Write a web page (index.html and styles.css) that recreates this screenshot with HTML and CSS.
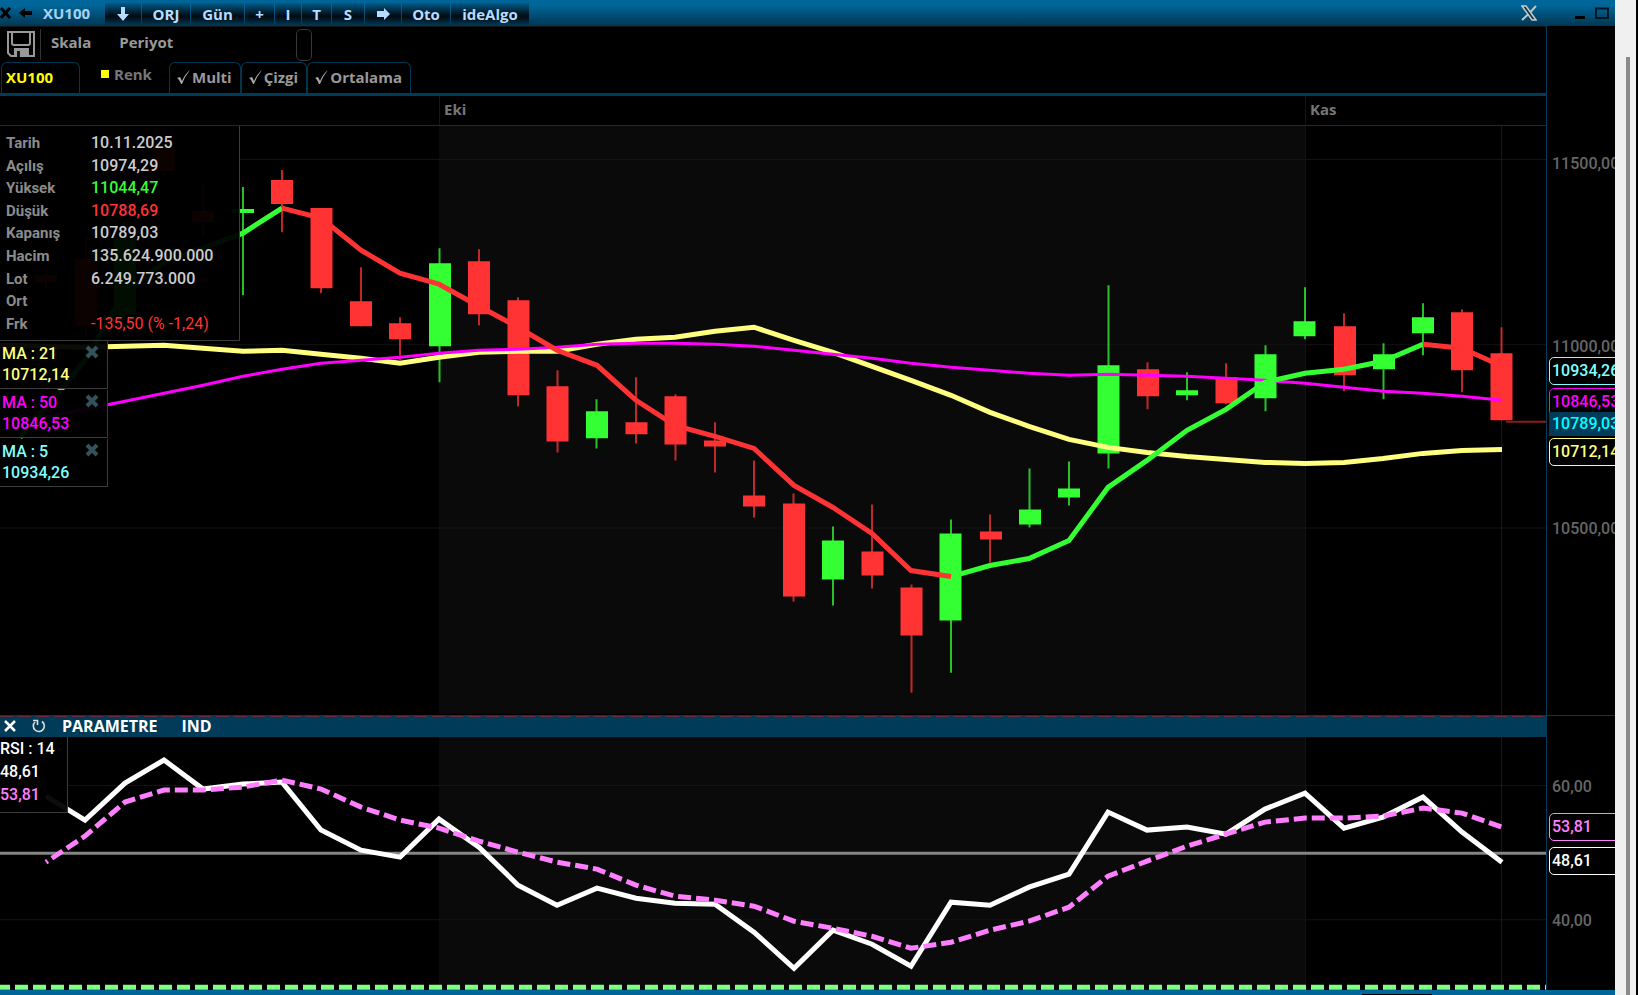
FILE: index.html
```html
<!DOCTYPE html>
<html lang="tr">
<head>
    <meta charset="UTF-8">
    <meta name="viewport" content="width=device-width, initial-scale=1.0">
    <title>XU100</title>
    <link rel="stylesheet" href="styles.css">
</head>
<body>
    <div class="window">
        <header class="titlebar">
            <button type="button" class="title-icon" aria-label="Kapat">
                <svg width="13" height="12" viewBox="0 0 13 12"><path d="M1 1l9 10M10 1L1 11" stroke="#000" stroke-width="3"/></svg>
            </button>
            <button type="button" class="title-icon" aria-label="Geri">
                <svg width="14" height="12" viewBox="0 0 14 12"><path d="M0 6l6-5v3h7v4H6v3z" fill="#000"/></svg>
            </button>
            <h1>XU100</h1>
            <nav class="title-buttons">
                <button type="button" class="w36" aria-label="Aşağı">
                    <svg width="14" height="14" viewBox="0 0 14 14"><path d="M5 0h4v7h4l-6 7-6-7h4z" fill="#b8dcff"/></svg>
                </button>
                <button type="button" class="w48">ORJ</button>
                <button type="button" class="w52">Gün</button>
                <button type="button" class="w28">+</button>
                <button type="button" class="w24">I</button>
                <button type="button" class="w28">T</button>
                <button type="button" class="w32">S</button>
                <button type="button" class="w36" aria-label="İleri">
                    <svg width="14" height="12" viewBox="0 0 14 12"><path d="M14 6L8 0v3H1v6h7v3z" fill="#b8dcff"/></svg>
                </button>
                <button type="button" class="w48">Oto</button>
                <button type="button" class="w76">ideAlgo</button>
            </nav>
            <div class="window-controls">
                <svg class="x-logo" width="16" height="16" viewBox="0 0 16 16">
                    <path d="M15 1L9 7.500M7 9.500L1 15" stroke="#b9c7d0" stroke-width="2" fill="none"/>
                    <path d="M1 1h4l10 14h-4z" fill="#16344a" stroke="#c5c9cc" stroke-width="1.500"/>
                </svg>
                <button type="button" aria-label="Küçült"><svg width="12" height="12" viewBox="0 0 12 12"><path d="M1 9h10v3H1z" fill="#000"/></svg></button>
                <button type="button" aria-label="Büyüt"><svg width="14" height="12" viewBox="0 0 14 12"><path d="M1 1.500h12v9.500H1z" fill="none" stroke="#001521" stroke-width="2"/></svg></button>
            </div>
        </header>

        <div class="workspace">
            <main class="panes">
                <div class="toolbar">
                    <button type="button" class="save" aria-label="Kaydet">
                        <svg width="28" height="27" viewBox="0 0 28 27">
                            <path d="M1 1h26v24H4l-3-3z" fill="none" stroke="#999" stroke-width="2"/>
                            <path d="M5 1v11q0 2 2 2h14q2 0 2-2V1" fill="none" stroke="#999" stroke-width="2"/>
                            <path d="M7 17h15v9H7z" fill="#999"/>
                            <path d="M10 20h3v6h-3z" fill="#111"/>
                        </svg>
                    </button>
                    <button type="button" class="menu">Skala</button>
                    <button type="button" class="menu">Periyot</button>
                    <button type="button" class="blank" aria-label="Boş"></button>
                </div>
                <div class="tabs">
                    <button type="button" class="tab symbol">XU100</button>
                    <button type="button" class="color"><span class="swatch"></span>Renk</button>
                    <button type="button" class="tab"><svg width="15" height="16" viewBox="0 0 15 16"><path d="M1 9l3-1 2 4Q9 5 14 1 9 7 6 15H5Q3 10 1 9z" fill="#aaa"/></svg>Multi</button>
                    <button type="button" class="tab"><svg width="15" height="16" viewBox="0 0 15 16"><path d="M1 9l3-1 2 4Q9 5 14 1 9 7 6 15H5Q3 10 1 9z" fill="#aaa"/></svg>Çizgi</button>
                    <button type="button" class="tab"><svg width="15" height="16" viewBox="0 0 15 16"><path d="M1 9l3-1 2 4Q9 5 14 1 9 7 6 15H5Q3 10 1 9z" fill="#aaa"/></svg>Ortalama</button>
                </div>
                <div class="months">
                    <span></span>
                    <span class="month">Eki</span>
                    <span class="month">Kas</span>
                </div>

                <section class="pane price">
                    <svg class="plot" viewBox="0 127 1546 588" preserveAspectRatio="none">
                        <rect x="439" y="127" width="866" height="587" fill="#0a0a0a"/>
                        <path class="grid" d="M0 160.500H1546M0 345.500H1546M0 528.500H1546M1305.500 127V715"/>
                        <path class="cursor" d="M1501.500 127V715"/>
                        <!-- wicks -->
                        <path class="wick down" d="M46 270V290M86 237V335M164 148V178M203 185V237M282 171V233M321 209V294M361 268V327M400 318V361M479 250V326M518 298V407M557.500 371V453M636 378V444M675.500 395V461M715 423V473M754 461V518M793.500 494V602M872 505V589M911.500 585V693M990 515V563M1147.500 363V410M1226 364V405M1344 314V392M1462 310V393M1501.500 328V421"/>
                        <path class="wick up" d="M243 188V296M439.500 249V383M596.500 400V449M833 527V606M951 520V673M1029.500 469V528M1069 462V506M1108.500 286V469M1187 373V401M1265.500 346V412M1305 288V340M1383.500 344V400M1423 304V356"/>
                        <!-- bodies -->
                        <path class="body down" d="M46 276V283M86 260V326M164 148V172M203 212V223M282 181V205M321.500 209V289M361 302V327M400 324V340M479 262V315M518.500 301V396M557.500 387V442M636.500 423V435M675.500 397V445M715 441V447M754 496V507M794 504V597M872.500 552V576M911.500 588V636M991 532V540M1148 370V397M1226.500 378V404M1345 327V376M1462 313V371M1501.500 354V421"/>
                        <path class="body up" d="M125 238V316M243 210V214M440 264V347M597 412V439M833 541V580M950.500 534V621M1030 510V525M1069 489V498M1108.500 366V454M1187 391V396M1265.500 355V399M1304.500 322V337M1384 355V370M1423 318V334"/>
                        <!-- moving averages -->
                        <path class="ma21" d="M0 346L85 348 125 347 164 346 203 349 243 352 282 351 321 355 361 359 400 364 439 358 479 353 518 352 557 352 597 345 636 340 675 338 715 332 754 328 794 341 833 353 872 367 911 381 951 396 990 413 1029 427 1069 440 1108 448 1147 453 1187 457 1226 460 1265 463 1305 464 1344 463 1383 459 1423 454 1462 451 1502 450"/>
                        <path class="ma50" d="M46 418L85 410 125 402 164 394 203 386 243 377 282 370 321 364 361 361 400 358 439 354 479 351 518 350 557 348 597 345 636 344 675 344 715 345 754 347 794 351 833 355 872 359 911 364 951 368 990 371 1029 374 1069 376 1108 375 1147 376 1187 377 1226 379 1265 381 1305 384 1344 388 1383 392 1423 394 1462 397 1502 401"/>
                        <path class="ma5 rising" d="M20 438L63 388 85 361 115 310 125 294 164 263 203 249 243 234 282 209"/>
                        <path class="ma5 rising" d="M951 577L990 566 1029 559 1069 541 1108 488 1147 461 1187 431 1226 410 1265 383 1305 374 1344 370 1383 362 1423 345"/>
                        <path class="ma5 falling" d="M282 209L321 219 361 251 400 274 439 285 479 307 518 328 557 351 597 366 636 401 675 426 715 437 754 449 794 486 833 508 872 534 911 571 951 577"/>
                        <path class="ma5 falling" d="M1423 345L1462 349 1502 367"/>
                        <path class="last" d="M1506 422.500H1546"/>
                    </svg>
                    <div class="overlays">
                        <div class="quote">
                            <table>
                                <tr><th scope="row">Tarih</th><td>10.11.2025</td></tr>
                                <tr><th scope="row">Açılış</th><td>10974,29</td></tr>
                                <tr><th scope="row">Yüksek</th><td class="high">11044,47</td></tr>
                                <tr><th scope="row">Düşük</th><td class="low">10788,69</td></tr>
                                <tr><th scope="row">Kapanış</th><td>10789,03</td></tr>
                                <tr><th scope="row">Hacim</th><td>135.624.900.000</td></tr>
                                <tr><th scope="row">Lot</th><td>6.249.773.000</td></tr>
                                <tr><th scope="row">Ort</th><td></td></tr>
                                <tr><th scope="row">Frk</th><td class="low diff">-135,50 (% -1,24)</td></tr>
                            </table>
                        </div>
                        <div class="legend yellow">
                            <div>MA : 21<br>10712,14</div>
                            <button type="button" aria-label="MA 21 kaldır"><svg width="14" height="14" viewBox="0 0 14 14"><path d="M2 2l10 10M12 2L2 12"/></svg></button>
                        </div>
                        <div class="legend magenta">
                            <div>MA : 50<br>10846,53</div>
                            <button type="button" aria-label="MA 50 kaldır"><svg width="14" height="14" viewBox="0 0 14 14"><path d="M2 2l10 10M12 2L2 12"/></svg></button>
                        </div>
                        <div class="legend cyan">
                            <div>MA : 5<br>10934,26</div>
                            <button type="button" aria-label="MA 5 kaldır"><svg width="14" height="14" viewBox="0 0 14 14"><path d="M2 2l10 10M12 2L2 12"/></svg></button>
                        </div>
                    </div>
                </section>

                <div class="pane-head">
                    <button type="button" aria-label="Kapat"><svg width="12" height="12" viewBox="0 0 12 12"><path d="M1 1l10 10M11 1L1 11" stroke="#fff" stroke-width="2.500"/></svg></button>
                    <button type="button" aria-label="Yenile"><svg width="14" height="14" viewBox="0 0 14 14"><path d="M10 2.500A5.500 5.500 0 1 1 3 3" fill="none" stroke="#ddd" stroke-width="1.600"/><path d="M1 1.500h4.500v4.500" fill="none" stroke="#ddd" stroke-width="1.600"/></svg></button>
                    <button type="button">PARAMETRE</button>
                    <button type="button">IND</button>
                </div>

                <section class="pane rsi">
                    <svg class="plot" viewBox="0 737 1546 253" preserveAspectRatio="none">
                        <rect x="439" y="737" width="866" height="253" fill="#0a0a0a"/>
                        <path class="grid" d="M0 785.500H1546M0 919.500H1546M1305.500 737V990"/>
                        <path class="cursor" d="M1501.500 737V990"/>
                        <path class="middle" d="M0 853H1546"/>
                        <path class="rsi-line" d="M46 796L85 820 125 783 164 760 203 789 243 784 282 782 321 830 361 850 400 857 439 819 479 847 518 885 557 905 597 888 636 898 675 903 715 904 754 932 794 968 833 930 872 944 911 966 951 902 990 905 1029 887 1069 874 1108 812 1147 830 1187 827 1226 834 1265 809 1305 793 1344 828 1383 817 1423 797 1462 832 1502 862"/>
                        <path class="rsi-average" d="M46 862L85 836 125 802 164 790 203 790 243 787 282 780 321 789 361 807 400 820 439 828 479 841 518 852 557 862 597 869 636 885 675 896 715 900 754 906 794 921 833 928 872 936 911 948 951 942 990 930 1029 921 1069 907 1108 876 1147 861 1187 846 1226 834 1265 822 1305 818 1344 818 1383 816 1423 808 1462 813 1502 827"/>
                        <path class="base" d="M0 987H1546"/>
                    </svg>
                    <div class="rsi-legend">RSI : 14<br>48,61<br><span>53,81</span></div>
                </section>
            </main>

            <aside class="axis">
                <div class="axis-top"></div>
                <div class="scale price-scale">
                    <span class="tick" style="top: 6.5%">11500,00</span>
                    <span class="tick" style="top: 37.5%">11000,00</span>
                    <span class="tick" style="top: 68.5%">10500,00</span>
                    <span class="tag cyan" style="top: 41.6%">10934,26</span>
                    <span class="tag magenta" style="top: 46.9%">10846,53</span>
                    <span class="tag current" style="top: 50.6%">10789,03</span>
                    <span class="tag yellow" style="top: 55.4%">10712,14</span>
                </div>
                <div class="axis-gap"></div>
                <div class="scale rsi-scale">
                    <span class="tick" style="top: 19.8%">60,00</span>
                    <span class="tick" style="top: 46.4%">50,00</span>
                    <span class="tick" style="top: 72.8%">40,00</span>
                    <span class="tag pink" style="top: 35.7%">53,81</span>
                    <span class="tag white" style="top: 49.2%">48,61</span>
                </div>
            </aside>
        </div>
        <footer class="bottom"><span></span></footer>
    </div>
    <div class="scrollbar"><div class="thumb"></div></div>
</body>
</html>
```
FILE: styles.css
```css
* {
    box-sizing: border-box;
}

body {
    margin: 0;
    height: 100vh;
    display: flex;
    background: #000;
    color: #ccc;
    font: 500 16px/22px Roboto, "Liberation Sans", sans-serif;
    overflow: hidden;
}

button {
    margin: 0;
    padding: 0;
    border: none;
    background: none;
    color: inherit;
    font: 700 15px/20px "Open Sans", "Noto Sans", sans-serif;
    cursor: pointer;
}

svg {
    display: block;
}

.window {
    flex: 1;
    min-width: 0;
    display: flex;
    flex-direction: column;
}

/* title bar */
.titlebar {
    flex: none;
    height: 26px;
    display: flex;
    align-items: center;
    background: linear-gradient(#006699 20%, #003652);
}

.title-icon {
    width: 19px;
}

.titlebar h1 {
    margin: 0;
    padding-left: 5px;
    width: 67px;
    color: #a6d2f5;
    font: 700 15px/20px "Open Sans", "Noto Sans", sans-serif;
}

.title-buttons {
    display: flex;
    gap: 1px;
    align-self: stretch;
    padding: 3px 0 1px;
}

.title-buttons button {
    display: flex;
    align-items: center;
    justify-content: center;
    background: linear-gradient(#005a88, #000a10 60%, #003652);
    color: #b8dcff;
}

.w24 { width: 26px; }
.w28 { width: 29px; }
.w32 { width: 32px; }
.w36 { width: 36px; }
.w48 { width: 48px; }
.w52 { width: 53px; }
.w76 { width: 78px; }

.window-controls {
    margin-left: auto;
    padding-right: 6px;
    display: flex;
    align-items: center;
    gap: 9px;
}

.x-logo {
    margin-right: 28px;
}

/* tool rows */
.workspace {
    flex: 1;
    min-height: 0;
    display: flex;
}

.panes {
    flex: 1;
    min-width: 0;
    display: flex;
    flex-direction: column;
}

.toolbar {
    flex: none;
    height: 36px;
    display: flex;
    align-items: center;
    border-top: 1px solid #151515;
    color: #999;
}

.save {
    padding: 2px 5px 2px 7px;
    border-right: 1px solid #333;
}

.menu {
    margin-left: 10px;
    margin-right: 18px;
    padding-bottom: 5px;
}

.blank {
    width: 16px;
    height: 32px;
    margin-left: 105px;
    border: 1px solid #383838;
    border-radius: 5px;
}

.tabs {
    flex: none;
    height: 34px;
    display: flex;
    border-bottom: 3px solid #003c5a;
    color: #999;
}

.tab {
    display: flex;
    align-items: center;
    gap: 1px;
    padding: 0 8px 3px 6px;
    border: 1px solid #003650;
    border-bottom: none;
    border-radius: 6px 6px 0 0;
}

.tab + .tab {
    margin-left: 0;
}

.symbol {
    width: 79px;
    margin-left: 1px;
    padding-left: 4px;
    color: #ff0;
}

.color {
    display: flex;
    align-items: center;
    gap: 5px;
    width: 89px;
    padding: 0 0 7px 21px;
    color: #777;
}

.swatch {
    width: 8px;
    height: 8px;
    background: #ff0;
}

.months {
    flex: none;
    height: 30px;
    display: grid;
    grid-template-columns: 439fr 866fr 241fr;
    border-bottom: 1px solid #003650;
}

.month {
    padding-left: 4px;
    border-left: 1px solid #151515;
    color: #777;
    font: 700 15px/26px "Open Sans", "Noto Sans", sans-serif;
}

/* charts */
.pane {
    position: relative;
    min-height: 0;
    overflow: hidden;
}

.price,
.price-scale {
    flex: 588 1 0;
}

.rsi,
.rsi-scale {
    flex: 253 1 0;
}

.plot {
    width: 100%;
    height: 100%;
}

.plot path {
    fill: none;
}

.grid { stroke: #131313; }
.cursor { stroke: #0000d8; }
.wick { stroke-width: 2; stroke-opacity: 0.75; }
.body { stroke-width: 22; }
.up { stroke: #33ff33; }
.down { stroke: #ff3333; }
.ma21 { stroke: #ffff80; stroke-width: 5; }
.ma50 { stroke: #ff00ff; stroke-width: 3; }
.ma5 { stroke-width: 5; }
.rising { stroke: #33ff33; }
.falling { stroke: #ff3333; }
.last { stroke: #8c1c1c; stroke-width: 2; }
.middle { stroke: #858585; stroke-width: 3; }
.rsi-line { stroke: #fff; stroke-width: 5; }
.rsi-average { stroke: #ff80ff; stroke-width: 5; stroke-dasharray: 13 5; stroke-dashoffset: 11; }
.base { stroke: #80ff80; stroke-width: 5; stroke-dasharray: 13 5; stroke-dashoffset: 3; }

/* panels floating over the charts */
.overlays {
    position: absolute;
    top: 0;
    left: 0;
}

.quote {
    width: 240px;
    padding: 6px 0 5px 6px;
    background: rgba(0, 0, 0, 0.95);
    border: solid #3c3c3c;
    border-width: 0 1px 1px 0;
}

.quote table {
    height: 203px;
    border-collapse: collapse;
}

.quote th,
.quote td {
    padding: 0;
    text-align: left;
}

.quote th {
    width: 85px;
    color: #8c8c8c;
    font-size: 15px;
    font-weight: 700;
}

.quote td.high { color: #33ff33; }
.quote td.low { color: #ff3333; }
.quote td.diff { font-weight: 400; }

.legend {
    width: 108px;
    height: 48px;
    margin-bottom: 1px;
    padding: 2px 8px 0 2px;
    display: flex;
    justify-content: space-between;
    align-items: flex-start;
    background: rgba(0, 0, 0, 0.95);
    border: solid #3c3c3c;
    border-width: 0 1px 1px 0;
    line-height: 21px;
}

.legend button {
    padding-top: 2px;
}

.legend path {
    stroke: #34525a;
    stroke-width: 4;
}

.yellow { color: #ffff80; }
.magenta { color: #ff00ff; }
.cyan { color: #80ffff; }
.pink { color: #ff80ff; }
.white { color: #fff; }

.pane-head {
    flex: none;
    height: 22px;
    padding-left: 4px;
    display: flex;
    align-items: center;
    gap: 16px;
    background: #003c5a;
    background-image: repeating-linear-gradient(90deg, #6b2a3a 0 13px, #003c5a 13px 18px);
    background-size: 100% 1px;
    background-position: 0 1px;
    background-repeat: no-repeat;
    color: #fff;
}

.pane-head button {
    font-size: 16px;
}

.pane-head button + button + button {
    margin-right: 8px;
}

.rsi-legend {
    position: absolute;
    top: 0;
    left: 0;
    width: 68px;
    padding: 0 0 6px;
    background: rgba(0, 0, 0, 0.95);
    border: solid #3c3c3c;
    border-width: 0 1px 1px 0;
    color: #fff;
    line-height: 23px;
}

.rsi-legend span {
    color: #ff80ff;
}

/* value axis */
.axis {
    width: 69px;
    display: flex;
    flex-direction: column;
    border-left: 1px solid #003c5a;
}

.axis-top {
    flex: none;
    height: 100px;
}

.axis-gap {
    flex: none;
    height: 22px;
    border-top: 1px solid #003c5a;
}

.scale {
    position: relative;
    overflow: hidden;
}

.tick,
.tag {
    position: absolute;
    transform: translateY(-50%);
}

.tick {
    left: 5px;
    color: #666;
}

.tag {
    left: 2px;
    width: 80px;
    padding: 2px 0 2px 2px;
    background: #000;
    border: 1px solid;
    border-radius: 5px;
}

.tag.current {
    padding: 1px 0 1px 3px;
    background: #003c5a;
    border: none;
    border-radius: 0;
    color: #00ffff;
}

.bottom {
    flex: none;
    height: 5px;
    display: flex;
    align-items: flex-end;
    background: #006699;
}

.bottom span {
    width: 70px;
    height: 1px;
    margin-left: auto;
    margin-right: 183px;
    background: #000;
}

.scrollbar {
    flex: none;
    width: 23px;
    padding: 57px 6px 0 11px;
    background: #f0f0f0;
    border-right: 2px solid #000;
}

.thumb {
    width: 4px;
    height: 100%;
    background: #8a8a8a;
}
```
